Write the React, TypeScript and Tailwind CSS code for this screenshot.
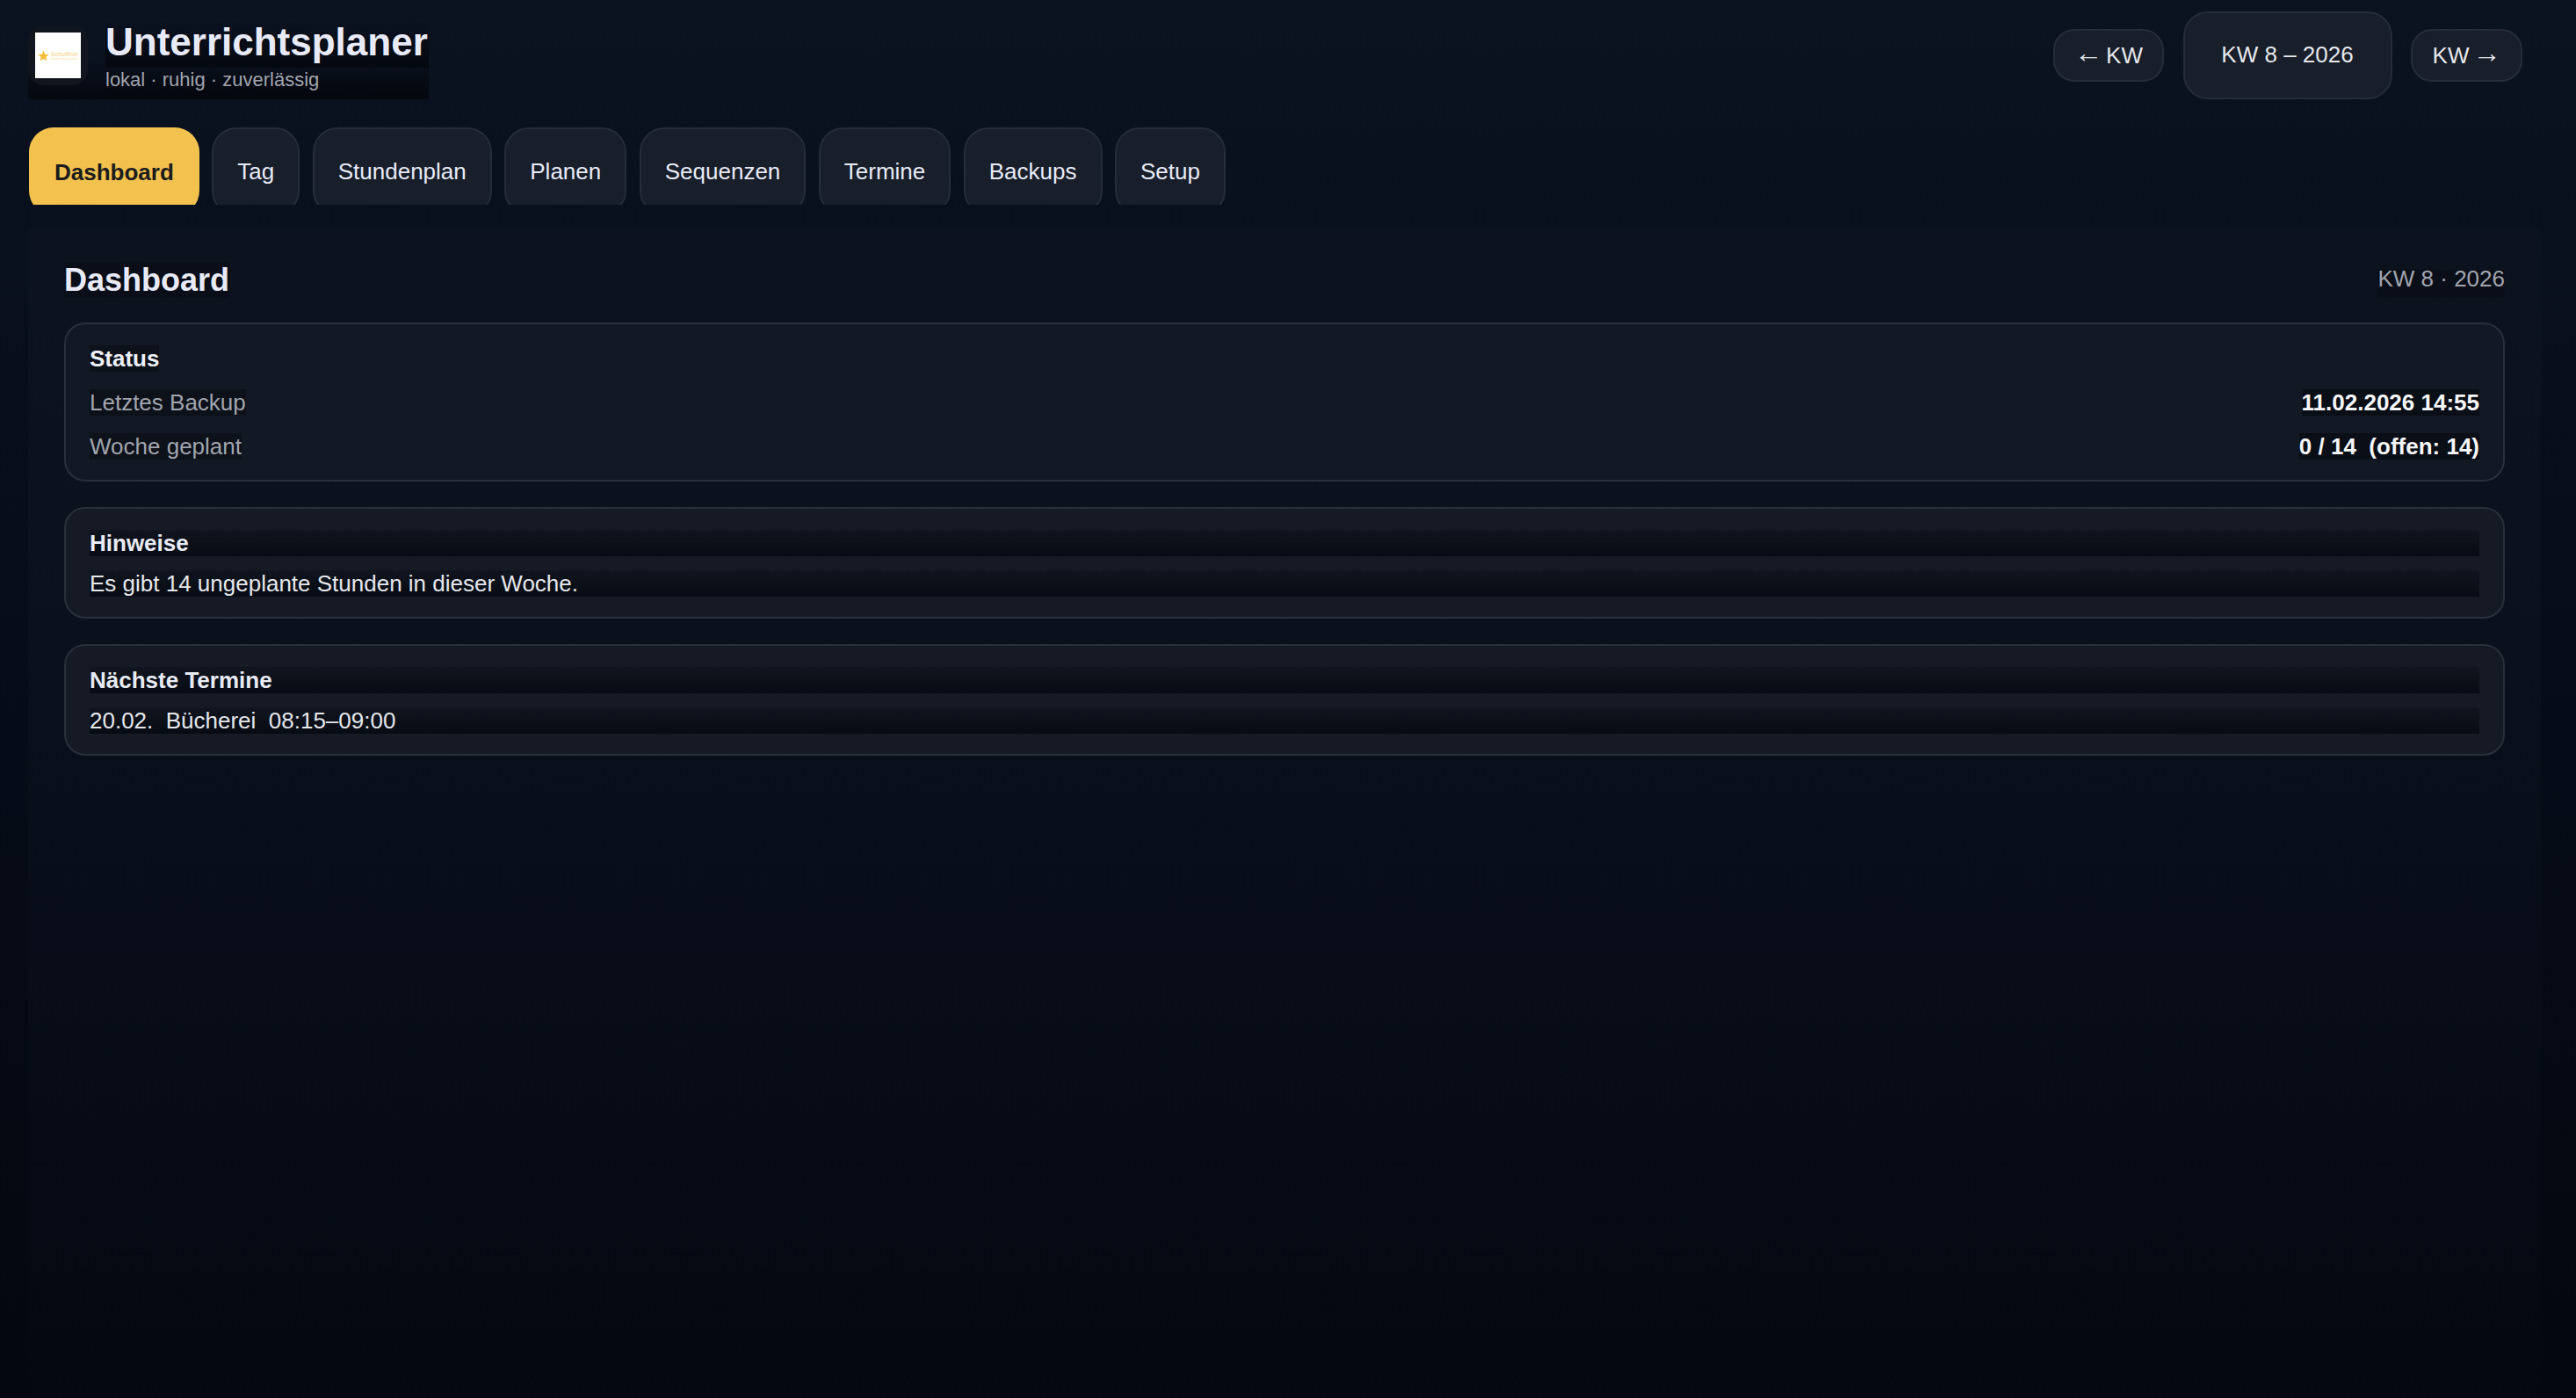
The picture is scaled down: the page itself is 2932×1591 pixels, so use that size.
const tabs = ['Dashboard', 'Tag', 'Stundenplan', 'Planen', 'Sequenzen', 'Termine', 'Backups', 'Setup'];

const fade = 'bg-gradient-to-b from-[#11151f] to-[#070b13]';

function Tab({ label, active }: { label: string; active: boolean }) {
  if (active) {
    return (
      <button className="h-[100px] shrink-0 self-start rounded-[28px] bg-[#f2c14e] px-[29px] pt-px text-[26px] font-bold text-[#1c1c1c]">
        {label}
      </button>
    );
  }
  return (
    <button className="h-[100px] shrink-0 self-start rounded-[28px] border-2 border-[#262c38] bg-[#181e2a] px-[27px] text-[26px] text-[#e8ebf7]">
      {label}
    </button>
  );
}

function Logo() {
  return (
    <div className="flex h-[68px] w-[68px] shrink-0 items-center justify-center rounded-[18px] bg-[#11151e]">
      <div className="flex h-[52px] w-[52px] items-center gap-[2px] overflow-hidden bg-white pl-[3px]">
        <svg viewBox="0 0 24 24" className="h-[13px] w-[13px] shrink-0" fill="#f5bd3c">
          <path d="M12 1l3.200 7.600 8.200.7-6.200 5.400 1.900 8L12 18.400l-7.100 4.300 1.900-8L.6 9.300l8.200-.7z" />
        </svg>
        <div className="flex flex-col whitespace-nowrap leading-none">
          <span className="text-[7px] text-[#f3cf7c]">Schulfiner</span>
          <span className="text-[4px] text-[#f8dc9c]">Unterricht planen</span>
        </div>
      </div>
    </div>
  );
}

function Row({ label, value }: { label: string; value: string }) {
  return (
    <div className="flex items-center justify-between">
      <span className="bg-[#0c111a] text-[#a1a5ae]">{label}</span>
      <span className="whitespace-pre bg-[#0a0e17] font-bold text-[#f5f6f8]">{value}</span>
    </div>
  );
}

function NoteCard({ title, text }: { title: string; text: string }) {
  return (
    <section className="flex flex-col gap-[16px] rounded-[24px] border-2 border-[#2a303b] bg-[#151a25] px-[27px] pb-[23px] pt-[24px]">
      <div className={`font-bold text-[#e8ebf3] ${fade}`}>{title}</div>
      <div className={`whitespace-pre text-[#e5e7eb] ${fade}`}>{text}</div>
    </section>
  );
}

export default function App() {
  return (
    <div className="h-[1591px] overflow-hidden bg-gradient-to-b from-[#0b1220] to-[#03070f] pl-[32px] pr-[40px] pt-[13px] font-['Liberation_Sans',Arial,sans-serif] text-[26px] leading-[30px]">
      <header className="flex h-[100px] items-center justify-between pr-[21px]">
        <div className="flex h-[91px] w-[456px] items-start self-end bg-gradient-to-b from-transparent via-transparent to-[#05080f] pt-[7px]">
          <Logo />
          <div className="-mt-[4px] ml-[20px] flex flex-1 flex-col">
            <h1 className="h-[52px] bg-gradient-to-b from-transparent to-[#05080f] text-[44px] font-bold leading-[46px] text-[#e8ebf7]">
              Unterrichtsplaner
            </h1>
            <p className="h-[36px] bg-gradient-to-b from-transparent to-[#05080f] text-[22px] leading-[27px] text-[#a1a5ae]">
              lokal · ruhig · zuverlässig
            </p>
          </div>
        </div>
        <div className="flex items-center gap-[21.5px]">
          <button className="flex h-[60px] w-[126px] items-center justify-center gap-[4px] rounded-[24px] border-2 border-[#262c38] bg-[#181e2a] text-[#e5e7eb]">
            <span className="pb-[6px] text-[32px] leading-none">←</span>
            <span>KW</span>
          </button>
          <div className="flex h-[100px] w-[238px] items-center justify-center rounded-[28px] border-2 border-[#262c38] bg-[#181e2a] pb-[2px] text-[#e5e7eb]">
            KW 8 – 2026
          </div>
          <button className="flex h-[60px] w-[127px] items-center justify-center gap-[4px] rounded-[24px] border-2 border-[#262c38] bg-[#181e2a] text-[#e5e7eb]">
            <span>KW</span>
            <span className="pb-[6px] text-[32px] leading-none">→</span>
          </button>
        </div>
      </header>

      <nav className="mt-[32px] flex h-[88px] gap-[14.5px] overflow-hidden pl-[1px]">
        {tabs.map((tab, i) => (
          <Tab key={tab} label={tab} active={i === 0} />
        ))}
      </nav>

      <main className="mt-[27px] h-[1400px] bg-gradient-to-b from-[#0c121e] to-transparent px-[41px] pt-[38px]">
        <div className="flex items-end justify-between">
          <h2 className="bg-[#0a0e18] text-[36px] font-bold leading-[41px] text-[#e8ebf7]">Dashboard</h2>
          <span className="h-[32px] bg-[#0a0e18] leading-[20px] text-[#a1a5ae]">KW 8 · 2026</span>
        </div>

        <div className="mt-[28px] flex flex-col gap-[29px]">
          <section className="flex flex-col gap-[20px] rounded-[24px] border-2 border-[#2a303b] bg-[#121824] px-[27px] pb-[23px] pt-[24px]">
            <div>
              <span className="bg-[#0c111a] font-bold text-[#eef0f8]">Status</span>
            </div>
            <Row label="Letztes Backup" value="11.02.2026 14:55" />
            <Row label="Woche geplant" value="0 / 14  (offen: 14)" />
          </section>
          <NoteCard title="Hinweise" text="Es gibt 14 ungeplante Stunden in dieser Woche." />
          <NoteCard title="Nächste Termine" text="20.02.  Bücherei  08:15–09:00" />
        </div>
      </main>
    </div>
  );
}
